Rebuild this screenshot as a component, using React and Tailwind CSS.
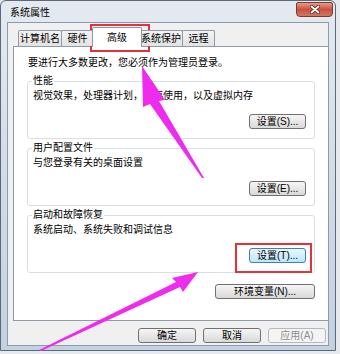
import React from 'react'

const font = "font-['Liberation_Sans','Noto_Sans_CJK_SC',sans-serif]"

const WinButton = ({ children, className = '', focused = false, disabled = false }) => (
  <div
    className={`h-[15px] flex items-center justify-center rounded-[3px] border text-[10px] leading-none ${
      disabled
        ? 'border-[#b5b9bd] bg-[#f4f4f4] text-[#8d8d8d]'
        : focused
        ? 'border-[#3c7fb1] bg-gradient-to-b from-[#eaf6fd] to-[#bee6fd] text-black'
        : 'border-[#707070] bg-gradient-to-b from-[#f6f6f6] to-[#d9d9d9] text-black'
    } ${className}`}
  >
    {children}
  </div>
)

const Group = ({ title, text, button, focused }) => (
  <fieldset className="border border-[#d5dfe5] rounded-[3px] px-[5px] pb-[9px] h-[64px]">
    <legend className="text-[10px] leading-[12px] px-[1px] -ml-[1px]">{title}</legend>
    <div className="mt-[3px] text-[10px] leading-[12px] whitespace-nowrap">{text}</div>
    <div className="flex justify-end mt-[12px] pr-[3px]">
      <WinButton className="w-[57px]" focused={focused}>{button}</WinButton>
    </div>
  </fieldset>
)

const tabs = [
  { label: '计算机名', w: 'w-[44px]' },
  { label: '硬件', w: 'w-[33px]' },
  { label: '高级', w: 'w-[50px]', active: true },
  { label: '系统保护', w: 'w-[44px]' },
  { label: '远程', w: 'w-[33px]' },
]

export default function App() {
  return (
    <div className={`w-[340px] h-[354px] bg-[#e6eaee] relative overflow-hidden text-black ${font}`}>
      <div className="w-[336px] h-[351px] border border-[#5b6a7b] rounded-t-[6px] bg-gradient-to-b from-[#e4eaf0] via-[#d2dce7] to-[#c3d1e0] flex flex-col">
        {/* title bar */}
        <div className="h-[21px] flex items-start justify-between shrink-0">
          <span className="text-[10px] leading-[12px] pl-[9px] pt-[6px]">系统属性</span>
          <div className="mt-[1px] mr-[2px] w-[37px] h-[15px] rounded-b-[4px] rounded-t-[2px] border border-[#7a3a34] bg-gradient-to-b from-[#e49a8c] via-[#c9503e] to-[#d27762] flex items-center justify-center">
            <svg width="10" height="9" viewBox="0 0 10 9">
              <path d="M1.5 1.5 L8.5 7.5 M8.5 1.5 L1.5 7.5" stroke="#4a1a14" strokeWidth="3" strokeLinecap="round" />
              <path d="M1.5 1.5 L8.5 7.5 M8.5 1.5 L1.5 7.5" stroke="#ffffff" strokeWidth="1.8" strokeLinecap="round" />
            </svg>
          </div>
        </div>

        {/* dialog body */}
        <div className="flex-1 mx-[6px] mb-[4px] bg-[#f0f0f0] border border-[#8b9bb0] flex flex-col">
          {/* tab strip */}
          <div className="h-[23px] pl-[10px] flex items-end relative z-10">
            {tabs.map((t) =>
              t.active ? (
                <div
                  key={t.label}
                  className={`${t.w} h-[20px] -mb-[1px] -mx-[2px] bg-white border border-[#8e9aa6] border-b-0 rounded-t-[2px] flex items-center justify-center text-[10px] leading-none relative z-10`}
                >
                  {t.label}
                </div>
              ) : (
                <div
                  key={t.label}
                  className={`${t.w} h-[16px] border border-[#8e9aa6] border-b-0 -ml-px first:ml-0 rounded-t-[2px] bg-gradient-to-b from-[#f3f3f3] to-[#e3e3e3] flex items-center justify-center text-[10px] leading-none`}
                >
                  {t.label}
                </div>
              )
            )}
          </div>

          {/* tab page */}
          <div className="ml-[5px] w-[316px] h-[275px] bg-white border border-[#8e9aa6] px-[13px] flex flex-col">
            <div className="pt-[10px] pl-[1px] text-[10px] leading-[12px] whitespace-nowrap">
              要进行大多数更改，您必须作为管理员登录。
            </div>
            <div className="mt-[6px] flex flex-col gap-[3px]">
              <Group title="性能" text="视觉效果，处理器计划，内存使用，以及虚拟内存" button="设置(S)..." />
              <Group title="用户配置文件" text="与您登录有关的桌面设置" button="设置(E)..." />
              <Group title="启动和故障恢复" text="系统启动、系统失败和调试信息" button="设置(T)..." focused />
            </div>
            <div className="flex justify-end mt-[11px]">
              <WinButton className="w-[100px] h-[14px]">环境变量(N)...</WinButton>
            </div>
          </div>

          {/* bottom buttons */}
          <div className="flex justify-end gap-[7px] mt-[7px] pr-[2px]">
            <WinButton className="w-[58px]">确定</WinButton>
            <WinButton className="w-[58px]">取消</WinButton>
            <WinButton className="w-[58px]" disabled>应用(A)</WinButton>
          </div>
        </div>
      </div>

      {/* red highlight boxes */}
      <div className="absolute left-[90px] top-[24px] w-[60px] h-[28px] border-2 border-[#e2323e]" />
      <div className="absolute left-[235px] top-[243px] w-[77px] h-[30px] border-2 border-[#e2323e]" />

      {/* pink arrows */}
      <svg className="absolute left-0 top-0 pointer-events-none" width="340" height="354" viewBox="0 0 340 354">
        <polygon
          points="142,66 165,100 159,101 204,178 202,178 150,104 143,107"
          fill="#ee2cee"
        />
        <polygon
          points="198,272 183,292 180,287 41,351 39,350 176,282 172,278"
          fill="#ee2cee"
        />
      </svg>
    </div>
  )
}
